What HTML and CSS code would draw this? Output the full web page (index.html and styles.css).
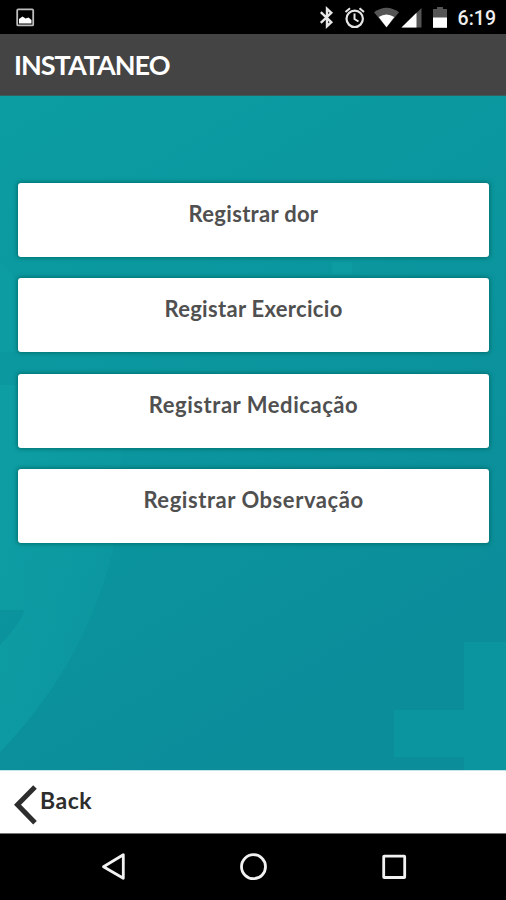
FILE: index.html
```
<!DOCTYPE html>
<html lang="pt">
<head>
    <meta charset="UTF-8">
    <meta name="viewport" content="width=device-width, initial-scale=1.0">
    <title>Instataneo</title>
    <link rel="stylesheet" href="styles.css">
</head>
<body>
    <div class="status-bar">
        <svg class="status-icons" width="506" height="34" viewBox="0 0 506 34">
            <!-- image notification -->
            <rect x="17.2" y="9.4" width="16" height="16" rx="1" fill="none" stroke="#bdbdbd" stroke-width="1.8"/>
            <path d="M19 23.500v-4.500l3.500-2.500 3 2 3-1 3 2.500v3.500z" fill="#fff"/>
            <!-- bluetooth -->
            <path d="M320.800 12.200l10.500 10-4.300 4V8.800l4.300 4-10.500 10" fill="none" stroke="#e6e6e6" stroke-width="2.400"/>
            <!-- alarm -->
            <circle cx="354.700" cy="18.800" r="8.200" fill="none" stroke="#e6e6e6" stroke-width="2.200"/>
            <path d="M354.500 13.500v5.500l4 2.500M345.500 12l4.500-3.800M359.500 8.200l4.500 3.800" fill="none" stroke="#e6e6e6" stroke-width="2"/>
            <!-- wifi -->
            <path d="M374 12.300q12.500-9.200 25 0L386.500 27.500z" fill="#555"/>
            <path d="M378.700 17q7.800-5 15.600 0L386.500 27.300z" fill="#fff"/>
            <!-- signal -->
            <path d="M421.500 8v19.500H401.500z" fill="#555"/>
            <path d="M416.500 12.800v14.700H401.500z" fill="#fff"/>
            <!-- battery -->
            <path d="M433 9h4V7h6v2h4v9h-14z" fill="#555"/>
            <path d="M433 17.500h14v10.300h-14z" fill="#fff"/>
        </svg>
        <span class="clock">6:19</span>
    </div>

    <div class="header">
        <h1>INSTATANEO</h1>
    </div>

    <div class="content">
        <svg class="backdrop" width="506" height="674" viewBox="0 96 506 674">
            <defs>
                <linearGradient id="teal" x1="0" y1="0" x2="0.45" y2="1">
                    <stop offset="0" stop-color="#0b9da2"/>
                    <stop offset="0.5" stop-color="#0b969e"/>
                    <stop offset="1" stop-color="#0b8d9a"/>
                </linearGradient>
                <linearGradient id="curve" x1="0" y1="0" x2="1" y2="0">
                    <stop offset="0" stop-color="#10a6a9" stop-opacity="0.45"/>
                    <stop offset="1" stop-color="#10a6a9" stop-opacity="0.2"/>
                </linearGradient>
            </defs>
            <rect y="96" width="506" height="674" fill="url(#teal)"/>
            <path d="M0 385h118q8 90-6 168Q84 665 0 752V645q18-18 25-35H0z" fill="url(#curve)"/>
            <path d="M0 262q12 10 18 20v70H0z" fill="#10a6a9" fill-opacity="0.25"/>
            <path d="M332 262h20v12h-20z" fill="#10a6a9" fill-opacity="0.35"/>
            <path d="M464 642h42v128h-42v-13h-70v-47h70z" fill="#0da3a8" fill-opacity="0.42"/>
        </svg>
        <div class="menu">
            <div class="menu-item">Registrar dor</div>
            <div class="menu-item">Registar Exercicio</div>
            <div class="menu-item wide">Registrar Medicação</div>
            <div class="menu-item wide">Registrar Observação</div>
        </div>
    </div>

    <div class="footer">
        <svg class="chevron" width="26" height="42" viewBox="0 0 26 42">
            <path d="M22 3L4.500 20.800 22 38.800" fill="none" stroke="#2d2d2d" stroke-width="5"/>
        </svg>
        <span class="back">Back</span>
    </div>

    <div class="nav-bar">
        <svg width="506" height="67" viewBox="0 833 506 67" fill="none" stroke="#f2f2f2" stroke-width="2.800">
            <path d="M123.300 854.800v23.500L103.500 866.800z" stroke-linejoin="round"/>
            <circle cx="253.500" cy="866.700" r="12"/>
            <rect x="383.700" y="856.200" width="21" height="21.300" rx="0.500"/>
        </svg>
    </div>
</body>
</html>
```
FILE: styles.css
```
* {
    box-sizing: border-box;
}
body {
    margin: 0;
    height: 900px;
    display: flex;
    flex-direction: column;
    overflow: hidden;
    background: #000;
    font-family: Lato, "Liberation Sans", sans-serif;
    font-weight: bold;
}
.status-bar {
    position: relative;
    display: flex;
    justify-content: flex-end;
    align-items: center;
    height: 34px;
    padding: 2px 10px 0 0;
    color: #eee;
    background: #000;
}
.status-icons {
    position: absolute;
    left: 0;
    top: 0;
}
.clock {
    font-family: Roboto, sans-serif;
    font-size: 19.5px;
    font-weight: 500;
}
.header {
    height: 62px;
    padding: 14px 14px 0;
    background: #444;
    border-bottom: 1px solid #3a5c5d;
}
h1 {
    margin: 0;
    font-size: 27px;
    line-height: 33px;
    letter-spacing: -1px;
    color: #fff;
}
.content {
    position: relative;
    height: 674px;
    padding: 86.8px 17px 0 18px;
}
.backdrop {
    position: absolute;
    left: 0;
    top: 0;
}
.menu {
    position: relative;
    display: flex;
    flex-direction: column;
    gap: 21.5px;
}
.menu-item {
    height: 74px;
    padding-top: 16px;
    border-radius: 3px;
    background: #fff;
    box-shadow: 0 0 4px 1px #00706f;
    color: #505050;
    font-size: 22px;
    line-height: 30px;
    letter-spacing: 0.3px;
    text-align: center;
}
.wide {
    letter-spacing: 0.55px;
}
.footer {
    display: flex;
    height: 63px;
    padding: 13px 13px 0;
    background: #fff;
    border-top: 1px solid #c5e5e8;
    color: #2d2d2d;
}
.back {
    padding-left: 1px;
    font-size: 23px;
    line-height: 32px;
    letter-spacing: 0.5px;
}
.nav-bar {
    height: 67px;
    border-top: 1px solid #777;
    background: #000;
}
.nav-bar svg {
    display: block;
    margin-top: -1px;
}
```
